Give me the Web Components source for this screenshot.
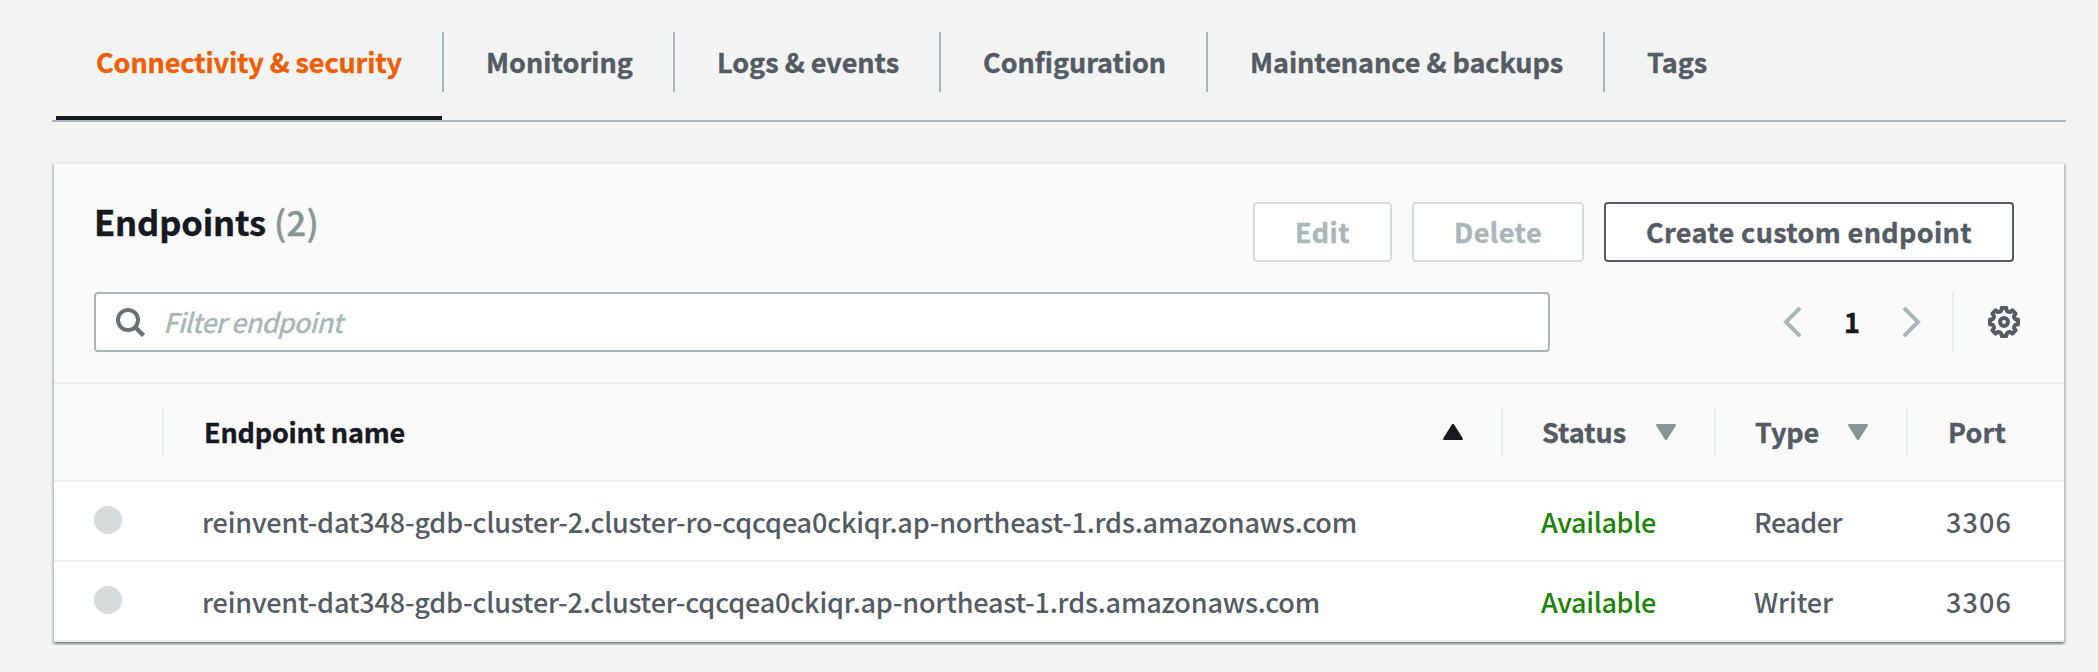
<!DOCTYPE html>
<html lang="en">
<head>
<meta charset="utf-8">
<title>Endpoints</title>
<style>
html,body{margin:0;height:672px;overflow:hidden;background:#f2f3f3}
body{font-family:"Noto Sans CJK SC","Noto Sans",sans-serif;font-weight:500;color:#545b64}
</style>
</head>
<body>
<rds-page></rds-page>
<script>
const define = (name, html, init) => customElements.define(name, class extends HTMLElement {
  connectedCallback() {
    if (this.shadowRoot) return;
    const t = document.createElement('template');
    t.innerHTML = html;
    this.attachShadow({mode: 'open'}).appendChild(t.content.cloneNode(true));
    if (init) init.call(this, this.shadowRoot);
  }
});

// A single line label whose tracking is set so that it fills the width in "w".
define('ui-text', `<style>
:host{display:block;flex:none;font-size:27px;line-height:40px;height:40px;white-space:pre}
span{display:inline-block;-webkit-text-stroke:var(--stroke,0) currentColor}
</style><span><slot></slot></span>`, function (root) {
  const w = +this.getAttribute('w');
  const span = root.querySelector('span');
  this.style.width = w + 'px';
  const n = this.textContent.length || 1;
  span.style.letterSpacing = ((w - span.getBoundingClientRect().width) / n).toFixed(3) + 'px';
});

define('ui-tab', `<style>
:host{display:block;position:relative;height:88px;box-sizing:border-box;font-weight:700;--stroke:.4px}
.in{display:flex;height:60px;box-sizing:border-box;padding:10px 40px 0 42px;border-right:2px solid #aab7b8}
:host([active]){color:#eb5f07}
:host([active]) .in{padding-left:40px}
:host([active]) .bar{height:4px;background:#16191f;margin:24px 2px 0 0}
:host([last]) .in{border:0}
</style><div class="in"><slot></slot></div><div class="bar"></div>`);

define('ui-tabs', `<style>
:host{display:flex;height:90px;box-sizing:border-box;border-bottom:2px solid #aab7b8;padding-left:4px;margin:32px 32px 0 52px}
</style><slot></slot>`);

define('ui-button', `<style>
:host{display:flex;height:60px;box-sizing:border-box;border:2px solid #545b64;border-radius:4px;background:#fff;padding:8px 40px 0;font-weight:700;--stroke:.4px}
:host([disabled]){border-color:#d5dbdb;color:#aab7b8}
</style><slot></slot>`);

const icons = {
  search: [32, 30, '<circle cx="12" cy="13" r="10" fill="none" stroke="#687078" stroke-width="4"/><path d="M19 20 27.5 28.5" stroke="#687078" stroke-width="4.4"/>'],
  left: [20, 32, '<path d="M18 2 4 16 18 30" fill="none" stroke="#aab7b8" stroke-width="4"/>'],
  right: [20, 32, '<path d="M2 2 16 16 2 30" fill="none" stroke="#aab7b8" stroke-width="4"/>'],
  up: [16, 16, '<path d="M8 1 15 15H1Z" fill="#16191f" stroke="#16191f" stroke-width="2" stroke-linejoin="round"/>'],
  down: [16, 16, '<path d="M8 15 15 1H1Z" fill="#879596" stroke="#879596" stroke-width="2" stroke-linejoin="round"/>'],
  gear: [32, 32, '']
};
{
  // Eight rounded teeth around the ring.
  let d = '';
  for (let i = 0; i < 8; i++) {
    const p = (r, a) => { const t = (i * 45 + a - 90) * Math.PI / 180; return (16 + r * Math.cos(t)).toFixed(2) + ' ' + (16 + r * Math.sin(t)).toFixed(2); };
    d += (i ? 'L' : 'M') + p(14.3, -9) + 'L' + p(14.3, 9) + 'L' + p(11.7, 14) + 'Q' + p(10.6, 22.5) + ' ' + p(11.7, 31);
  }
  icons.gear[2] = `<path d="${d}Z" fill="none" stroke="#545b64" stroke-width="4" stroke-linejoin="round"/><circle cx="16" cy="16" r="4" fill="none" stroke="#545b64" stroke-width="4"/>`;
}
define('ui-icon', `<style>:host{display:block;flex:none}svg{display:block;width:100%;height:100%}</style>`, function (root) {
  const [w, h, body] = icons[this.getAttribute('name')];
  this.style.width = (this.getAttribute('w') || w) + 'px';
  this.style.height = h + 'px';
  root.innerHTML += `<svg viewBox="0 0 ${w} ${h}" preserveAspectRatio="none">${body}</svg>`;
});

define('ui-filter', `<style>
:host{display:flex;width:1456px;height:60px;box-sizing:border-box;border:2px solid #aab7b8;border-radius:4px;background:#fff;padding:0 20px;color:#aab7b8;font-style:italic}
ui-icon{margin-top:13px}ui-text{margin:8px 0 0 15px}
</style><ui-icon name="search"></ui-icon><ui-text w="179">Filter endpoint</ui-text>`);

define('ui-pager', `<style>
:host{display:flex;height:60px;align-items:center}
ui-text{margin:0 44px 0 42px;color:#16191f;font-weight:700;--stroke:.4px}
i{width:2px;height:60px;background:#eaeded;margin:0 34px 0 30px}
</style><ui-icon name="left"></ui-icon><ui-text w="14">1</ui-text><ui-icon name="right"></ui-icon><i></i><ui-icon name="gear"></ui-icon>`);

define('ui-card', `<style>
:host{display:block;width:2010px;height:480px;box-sizing:border-box;margin:40px 0 0 54px;border-top:2px solid #eaeded;background:#fff;box-shadow:0 2px 2px 0 rgba(0,28,36,.3),2px 2px 2px 0 rgba(0,28,36,.15),-2px 2px 2px 0 rgba(0,28,36,.15)}
</style><slot></slot>`);

define('ui-card-header', `<style>
:host{display:block;height:220px;box-sizing:border-box;background:#fafafa;border-bottom:2px solid #eaeded;padding:38px 0 0 40px}
.top{display:flex;height:60px;gap:20px;width:1920px}
h2{display:flex;margin:-1px auto 0 0;color:#16191f;font-size:inherit;--stroke:.4px}
h2 ui-text{font-size:34.5px}
.count{color:#879596;font-weight:500;margin-left:8px}
.row{display:flex;justify-content:space-between;width:1926px;margin-top:30px}
</style>
<div class="top"><h2><ui-text w="172">Endpoints</ui-text><ui-text class="count" w="45">(2)</ui-text></h2>
<ui-button disabled><ui-text w="55">Edit</ui-text></ui-button>
<ui-button disabled><ui-text w="88">Delete</ui-text></ui-button>
<ui-button><ui-text w="326">Create custom endpoint</ui-text></ui-button></div>
<div class="row"><ui-filter></ui-filter><ui-pager></ui-pager></div>`);

define('ui-row', `<style>
:host{display:grid;grid-template-columns:110px 1339px 213px 192px 156px;height:80px;box-sizing:border-box;border-bottom:2px solid #eaeded;padding-top:18px}
:host([head]){height:98px;background:#fafafa;font-weight:700;padding-top:24px;--stroke:.4px}
</style><slot></slot>`);

define('ui-th', `<style>
:host{display:flex;height:48px;box-sizing:border-box;border-right:2px solid #eaeded;padding:4px 38px 0 39px;justify-content:space-between}
:host([last]){border:0;padding-left:40px}:host([sorted]){color:#16191f;padding-left:40px}
</style><slot></slot>`);

define('ui-td', `<style>
:host{display:block;padding:2px 0 0 38px}
:host([ok]){color:#1d8102}
</style><slot></slot>`);

define('ui-radio', `<style>
:host{display:block;width:28px;height:28px;border-radius:50%;background:#d5dbdb;margin:6px 0 0 40px}
</style>`);

define('rds-page', `<style>:host{display:flow-root;width:2098px;height:672px;overflow:hidden}
ui-icon{margin-top:12px}</style>
<ui-tabs>
<ui-tab active><ui-text w="306">Connectivity &amp; security</ui-text></ui-tab>
<ui-tab><ui-text w="147">Monitoring</ui-text></ui-tab>
<ui-tab><ui-text w="182">Logs &amp; events</ui-text></ui-tab>
<ui-tab><ui-text w="183">Configuration</ui-text></ui-tab>
<ui-tab><ui-text w="313">Maintenance &amp; backups</ui-text></ui-tab>
<ui-tab last><ui-text w="60">Tags</ui-text></ui-tab>
</ui-tabs>
<ui-card>
<ui-card-header></ui-card-header>
<ui-row head>
<ui-th></ui-th>
<ui-th sorted><ui-text w="201">Endpoint name</ui-text><ui-icon name="up" w="20"></ui-icon></ui-th>
<ui-th><ui-text w="84">Status</ui-text><ui-icon name="down" w="20"></ui-icon></ui-th>
<ui-th><ui-text w="64">Type</ui-text><ui-icon name="down" w="20"></ui-icon></ui-th>
<ui-th last><ui-text w="58">Port</ui-text></ui-th>
</ui-row>
<ui-row>
<ui-radio></ui-radio>
<ui-td><ui-text w="1155">reinvent-dat348-gdb-cluster-2.cluster-ro-cqcqea0ckiqr.ap-northeast-1.rds.amazonaws.com</ui-text></ui-td>
<ui-td ok><ui-text w="115">Available</ui-text></ui-td><ui-td><ui-text w="88">Reader</ui-text></ui-td><ui-td><ui-text w="66">3306</ui-text></ui-td>
</ui-row>
<ui-row>
<ui-radio></ui-radio>
<ui-td><ui-text w="1118">reinvent-dat348-gdb-cluster-2.cluster-cqcqea0ckiqr.ap-northeast-1.rds.amazonaws.com</ui-text></ui-td>
<ui-td ok><ui-text w="115">Available</ui-text></ui-td><ui-td><ui-text w="79">Writer</ui-text></ui-td><ui-td><ui-text w="66">3306</ui-text></ui-td>
</ui-row>
</ui-card>`);
</script>
</body>
</html>
